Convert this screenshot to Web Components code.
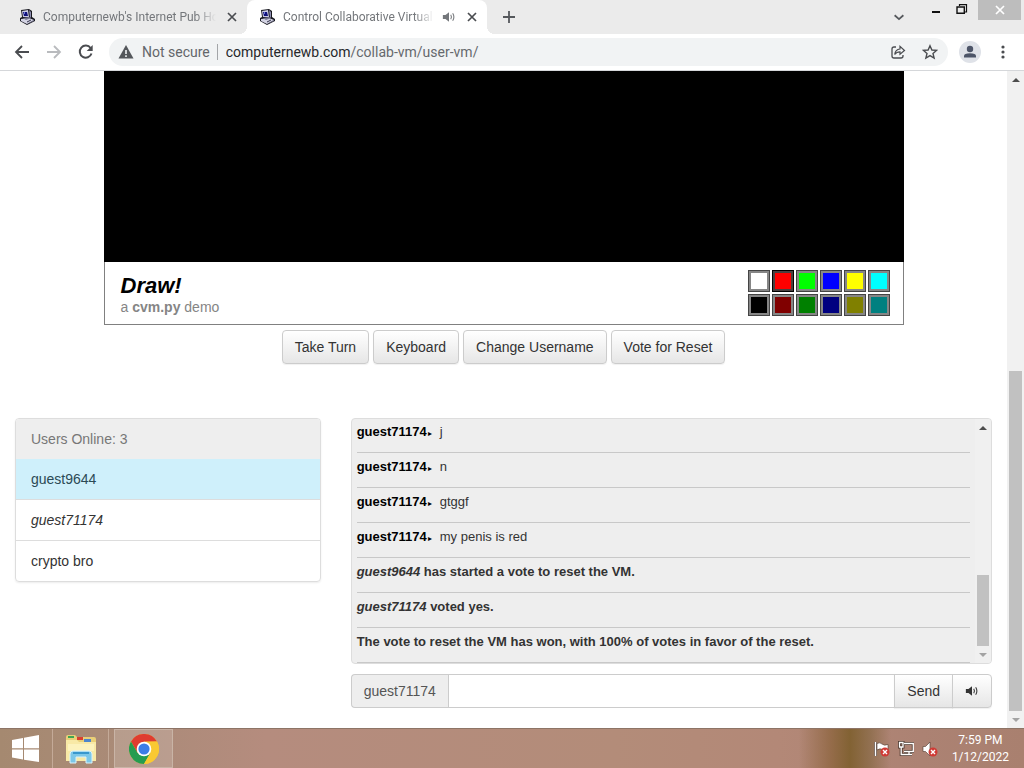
<!DOCTYPE html>
<html lang="en">
<head>
<meta charset="utf-8">
<title>Control Collaborative Virtual Machines</title>
<style>
html, body {
    margin: 0;
    height: 100%;
}
body {
    font-family: Roboto, "Open Sans", sans-serif;
    font-size: 12px;
    overflow: hidden;
}
</style>
</head>
<body>
<desktop-screen>
    <tab-strip slot="tabs">
        <browser-tab>Computernewb's Internet Pub Home</browser-tab>
        <browser-tab active audible>Control Collaborative Virtual Machines</browser-tab>
    </tab-strip>
    <nav-bar slot="nav" host="computernewb.com" path="/collab-vm/user-vm/"></nav-bar>
    <vm-page slot="page">
        <vm-display slot="display"></vm-display>
        <vm-button slot="actions">Take Turn</vm-button>
        <vm-button slot="actions">Keyboard</vm-button>
        <vm-button slot="actions">Change Username</vm-button>
        <vm-button slot="actions">Vote for Reset</vm-button>
        <user-list slot="users"></user-list>
        <chat-box slot="chat" username="guest71174"></chat-box>
    </vm-page>
    <scroll-bar slot="scroll" style="--before: 283; --thumb: 340; --after: 0"></scroll-bar>
    <task-bar slot="taskbar"></task-bar>
</desktop-screen>

<script>
// every component builds its shadow root from the static html of its class
class BaseElement extends HTMLElement {
    constructor() {
        super()
        const template = document.createElement("template")
        template.innerHTML = this.constructor.html
        this.attachShadow({ mode: "open" }).append(template.content.cloneNode(true))
    }
}

const icons = {
    computer: `<svg viewBox="0 0 16 16">
        <path d="M2 1 10 0 13 2 13 8 16 10 16 12 8 16 1 12 1 9 3 8Z" fill="#17171f"/>
        <path d="M3 2 9 1 10 8 4 8Z" fill="#c9c9e2"/>
        <path d="M4 3 8 3 9 7 5 7Z" fill="#11117c"/>
        <path d="M5 3h1v2h-1z" fill="#6d7be0"/>
        <path d="M10 1 12 3 12 8 11 9Z" fill="#8c8cae"/>
        <path d="M2 10 10 9 15 11 8 15 2 12Z" fill="#d4d4e4"/>
        <path d="M2 12 8 15 15 11 15 12 8 15Z" fill="#7a7a96"/>
        <path d="M4 9 10 8 12 9 7 11Z" fill="#77778f"/>
        <path d="M8 13 12 11" stroke="#33334a"/></svg>`,
    close: `<svg viewBox="0 0 16 16"><path d="M4 4 12 12M12 4 4 12" stroke="currentColor" stroke-width="1.7"/></svg>`,
    plus: `<svg viewBox="0 0 16 16"><path d="M8 2V14M2 8H14" stroke="currentColor" stroke-width="1.8"/></svg>`,
    chevron: `<svg viewBox="0 0 16 16"><path d="M3 6 8 10.5 13 6" fill="none" stroke="currentColor" stroke-width="2"/></svg>`,
    minimize: `<svg viewBox="0 0 16 16"><path d="M4 10H12" stroke="#111" stroke-width="2"/></svg>`,
    restore: `<svg viewBox="0 0 16 16"><path d="M5.5 4V2.6H12.5V10H11" fill="none" stroke="#111" stroke-width="1.2"/><path d="M3 5H10.3V11.3H3Z" fill="none" stroke="#111" stroke-width="1.4"/></svg>`,
    back: `<svg viewBox="0 0 16 16"><path d="M15 8H2M8 2 2 8 8 14" fill="none" stroke="currentColor" stroke-width="1.8"/></svg>`,
    forward: `<svg viewBox="0 0 16 16"><path d="M1 8H14M8 2 14 8 8 14" fill="none" stroke="currentColor" stroke-width="1.8"/></svg>`,
    reload: `<svg viewBox="0 0 16 16"><path d="M13.5 9.5A6 6 0 1 1 12.6 4" fill="none" stroke="currentColor" stroke-width="2"/><path d="M14.7 1V7H8.7Z" fill="currentColor"/></svg>`,
    warning: `<svg viewBox="0 0 16 16"><path d="M8 1 15.5 14.5H.5Z" fill="#54575b"/><path d="M8 6V10M8 11.3V13" stroke="#f1f3f4" stroke-width="1.6"/></svg>`,
    share: `<svg viewBox="0 0 16 16"><path d="M6 3H4Q2 3 2 5V12Q2 14 4 14H11Q13 14 13 12V11" fill="none" stroke="currentColor" stroke-width="1.3"/><path d="M4.7 10.5Q5.3 5.3 10 5V2.4L14.5 6.5 10 10.3V7.8Q6.5 7.8 4.7 10.5Z" fill="none" stroke="currentColor" stroke-width="1.2"/></svg>`,
    star: `<svg viewBox="0 0 16 16"><path d="M8 1.8 9.9 6 14.5 6.4 11 9.5 12.1 14 8 11.6 3.9 14 5 9.5 1.5 6.4 6.1 6Z" fill="none" stroke="currentColor" stroke-width="1.4"/></svg>`,
    person: `<svg viewBox="0 0 22 22"><circle cx="11" cy="11" r="11" fill="#dfe2e8"/><circle cx="11" cy="8" r="3.2" fill="#4d5568"/><path d="M5 16.5V15Q5 12.2 11 12.2 17 12.2 17 15V16.5Z" fill="#4d5568"/></svg>`,
    dots: `<svg viewBox="0 0 16 16"><g fill="currentColor"><circle cx="8" cy="3" r="1.6"/><circle cx="8" cy="8" r="1.6"/><circle cx="8" cy="13" r="1.6"/></g></svg>`,
    speaker: `<svg viewBox="0 0 16 16"><path d="M1 5.7H4L8 2.5V13.5L4 10.3H1Z" fill="currentColor"/><path d="M10 5.5Q11.6 8 10 10.5M12.2 3.7Q15 8 12.2 12.3" fill="none" stroke="currentColor" stroke-width="1.2"/></svg>`,
    windows: `<svg viewBox="0 0 28 28"><path d="M1 5 12 3V13.3H1ZM13 2.8 28 0V13.3H13ZM1 14.4H12V24.5L1 22.5ZM13 14.4H28V27L13 24.7Z" fill="#fff"/></svg>`,
    explorer: `<svg viewBox="0 0 32 30">
        <path d="M1 3Q1 1 3 1H10L12 3H29Q31 3 31 5V26H1Z" fill="#e9cf78"/>
        <path d="M1 6H12L14 8H31V27H1Z" fill="#f8e9a6"/>
        <path d="M3 2h6v2H3z" fill="#3fa653"/><path d="M12 3h6v3h-6z" fill="#d9402e"/><path d="M19 5h7v3h-7z" fill="#4d86cc"/>
        <path d="M3 10H29V17H3Z" fill="#fcf2bd"/>
        <path d="M5 29V20Q5 17 8 17H24Q27 17 27 20V29H21V23H11V29Z" fill="#7cc7e8" stroke="#d9f2fb"/>
        <path d="M8 19H24" stroke="#3897cd" stroke-width="2"/></svg>`,
    chrome: `<svg viewBox="0 0 30 30">
        <circle cx="15" cy="15" r="15" fill="#f9c932"/>
        <path d="M2 7.5A15 15 0 0 1 28 7.5L15 8 8.5 18.7Z" fill="#df3c30"/>
        <path d="M2 7.5 8.5 18.7 15 22 21.5 18.7 15 30A15 15 0 0 1 2 7.5Z" fill="#259c50"/>
        <path d="M28 7.5H15L21.5 18.7 15 30A15 15 0 0 0 28 7.5Z" fill="#f9c932"/>
        <circle cx="15" cy="15" r="7.3" fill="#fff"/><circle cx="15" cy="15" r="5.6" fill="#3c7de6"/></svg>`,
    flag: `<svg viewBox="0 0 16 16"><path d="M1.5 1V15" stroke="#4d382e" stroke-width="3"/><path d="M1.5 1V15" stroke="#fff" stroke-width="1.6"/><path d="M3 2.5Q6 1 8 3T14 3.5V9Q11 10 8.5 8.5T3 9Z" fill="#fff" stroke="#4d382e" stroke-width=".6"/><circle cx="11" cy="11" r="4.5" fill="#cf3b35"/><path d="M9 9 13 13M13 9 9 13" stroke="#fff" stroke-width="1.4"/></svg>`,
    network: `<svg viewBox="0 0 16 16"><path d="M6 2.5H15.3V10.5H6M8 13.5H14M11 10.5V13.5M1.5 1.5H5V6H1.5ZM3.2 6V13.5H8" fill="none" stroke="#4d382e" stroke-width="3"/><path d="M6 2.5H15.3V10.5H6M8 13.5H14M11 10.5V13.5M1.5 1.5H5V6H1.5ZM3.2 6V13.5H8" fill="none" stroke="#fff" stroke-width="1.3"/></svg>`,
    muted: `<svg viewBox="0 0 16 16"><path d="M1 5.5H3.5L8 1V15L3.5 10.5H1Z" fill="#fff" stroke="#4d382e" stroke-width=".6"/><circle cx="11" cy="11" r="4.5" fill="#cf3b35"/><path d="M9 9 13 13M13 9 9 13" stroke="#fff" stroke-width="1.4"/></svg>`,
    up: `<svg viewBox="0 0 16 16"><path d="M4 10 8 6 12 10Z" fill="currentColor"/></svg>`,
    down: `<svg viewBox="0 0 16 16"><path d="M4 6 8 10 12 6Z" fill="currentColor"/></svg>`
}

class UiIcon extends BaseElement {
    static html = `
    <style>
    :host {
        display: block;
        flex: none;
        width: var(--size, 16px);
        height: var(--size, 16px);
    }
    svg {
        display: block;
        width: 100%;
        height: 100%;
    }
    </style>`

    connectedCallback() {
        const holder = document.createElement("template")
        holder.innerHTML = icons[this.getAttribute("name")]
        this.shadowRoot.append(holder.content)
    }
}

class DesktopScreen extends BaseElement {
    static html = `
    <style>
    :host {
        display: flex;
        flex-direction: column;
        height: 100vh;
        background: #fff;
    }
    main {
        flex: 1;
        min-height: 0;
        display: flex;
        border-top: 1px solid #d5d7da;
    }
    ::slotted([slot="page"]) {
        flex: 1;
        min-width: 0;
    }
    </style>
    <slot name="tabs"></slot>
    <slot name="nav"></slot>
    <main>
        <slot name="page"></slot>
        <slot name="scroll"></slot>
    </main>
    <slot name="taskbar"></slot>`
}

class TabStrip extends BaseElement {
    static html = `
    <style>
    :host {
        display: flex;
        height: 34px;
        padding-left: 7px;
        background: #ebebeb;
        color: #55585c;
    }
    button {
        border: 0;
        padding: 0;
        background: none;
        color: inherit;
    }
    .new {
        padding: 0 14px;
    }
    .list {
        margin-left: auto;
        padding: 0 17px;
        --size: 14px;
    }
    .window {
        display: flex;
        align-items: flex-start;
        padding-right: 3px;
    }
    .window button {
        width: 26px;
        height: 20px;
        display: flex;
        justify-content: center;
        align-items: center;
    }
    .window .shut {
        width: 43px;
        margin-left: 3px;
        background: #bdbdbd;
        color: #fff;
    }
    </style>
    <slot></slot>
    <button class="new" aria-label="New tab"><ui-icon name="plus"></ui-icon></button>
    <button class="list" aria-label="Search tabs"><ui-icon name="chevron"></ui-icon></button>
    <div class="window">
        <button aria-label="Minimize"><ui-icon name="minimize"></ui-icon></button>
        <button aria-label="Restore"><ui-icon name="restore"></ui-icon></button>
        <button class="shut" aria-label="Close"><ui-icon name="close"></ui-icon></button>
    </div>`
}

class BrowserTab extends BaseElement {
    static html = `
    <style>
    :host {
        position: relative;
        box-sizing: border-box;
        flex: 0 1 240px;
        min-width: 0;
        display: flex;
        align-items: center;
        gap: 8px;
        padding: 0 7px 0 12px;
        color: #74777b;
    }
    :host([active]) {
        background: #fff;
        border-radius: 8px 8px 0 0;
    }
    /* flared feet of the active tab */
    :host([active])::before, :host([active])::after {
        content: "";
        position: absolute;
        bottom: 0;
        width: 8px;
        height: 8px;
    }
    :host([active])::before {
        right: 100%;
        background: radial-gradient(circle at 0 0, transparent 8px, #fff 8px);
    }
    :host([active])::after {
        left: 100%;
        background: radial-gradient(circle at 100% 0, transparent 8px, #fff 8px);
    }
    .title {
        flex: 1;
        overflow: hidden;
        white-space: nowrap;
        line-height: 20px;
        -webkit-mask-image: linear-gradient(to left, transparent, #000 20px);
        mask-image: linear-gradient(to left, transparent, #000 20px);
    }
    .sound {
        display: none;
        --size: 14px;
    }
    :host([audible]) .sound {
        display: block;
    }
    button {
        border: 0;
        padding: 0;
        background: none;
        color: #4a4c50;
    }
    </style>
    <ui-icon name="computer"></ui-icon>
    <span class="title"><slot></slot></span>
    <ui-icon class="sound" name="speaker"></ui-icon>
    <button aria-label="Close tab"><ui-icon name="close"></ui-icon></button>`
}

class NavBar extends BaseElement {
    static html = `
    <style>
    :host {
        display: flex;
        align-items: center;
        height: 36px;
        padding: 0 13px 0 14px;
        background: #fff;
        color: #4a4c50;
    }
    button {
        border: 0;
        padding: 0;
        background: none;
        color: inherit;
    }
    .nav {
        display: flex;
        gap: 16px;
        padding-right: 15px;
    }
    .nav button:nth-child(2) {
        color: #b9bbbe;
    }
    .address {
        flex: 1;
        min-width: 0;
        display: flex;
        align-items: center;
        gap: 8px;
        height: 28px;
        padding: 0 10px 0 9px;
        border-radius: 14px;
        background: #f1f3f4;
        font-size: 14px;
        line-height: 20px;
    }
    .security {
        padding-right: 7px;
        border-right: 1px solid #a3a5a8;
        line-height: 16px;
        white-space: nowrap;
        color: #63666a;
    }
    .url {
        flex: 1;
        overflow: hidden;
        white-space: nowrap;
        color: #66696d;
    }
    .url b {
        font-weight: normal;
        color: #26282b;
    }
    .star {
        margin-left: 8px;
    }
    .profile {
        margin: 0 14px 0 11px;
        --size: 22px;
    }
    </style>
    <div class="nav">
        <button aria-label="Back"><ui-icon name="back"></ui-icon></button>
        <button aria-label="Forward"><ui-icon name="forward"></ui-icon></button>
        <button aria-label="Reload"><ui-icon name="reload"></ui-icon></button>
    </div>
    <div class="address">
        <ui-icon name="warning"></ui-icon>
        <span class="security">Not secure</span>
        <span class="url"><b></b><span class="path"></span></span>
        <button aria-label="Share"><ui-icon name="share"></ui-icon></button>
        <button class="star" aria-label="Bookmark"><ui-icon name="star"></ui-icon></button>
    </div>
    <button class="profile" aria-label="Profile"><ui-icon name="person"></ui-icon></button>
    <button aria-label="Menu"><ui-icon name="dots"></ui-icon></button>`

    connectedCallback() {
        this.shadowRoot.querySelector("b").textContent = this.getAttribute("host")
        this.shadowRoot.querySelector(".path").textContent = this.getAttribute("path")
    }
}

// --before, --thumb and --after are the shares of the track
class ScrollBar extends BaseElement {
    static html = `
    <style>
    :host {
        display: flex;
        flex-direction: column;
        flex: none;
        width: 17px;
        background: #f1f1f1;
    }
    .arrow {
        height: 17px;
        display: flex;
        justify-content: center;
        align-items: center;
        color: #4d4d4d;
    }
    .arrow:last-child {
        color: #a3a3a3;
    }
    .thumb {
        flex: var(--thumb) 0 0;
        margin: 0 2px;
        background: #c1c1c1;
    }
    .before {
        flex: var(--before) 0 0;
    }
    .after {
        flex: var(--after) 0 0;
    }
    </style>
    <div class="arrow"><ui-icon name="up"></ui-icon></div>
    <div class="before"></div>
    <div class="thumb"></div>
    <div class="after"></div>
    <div class="arrow"><ui-icon name="down"></ui-icon></div>`
}

class VmPage extends BaseElement {
    static html = `
    <style>
    :host {
        display: block;
        overflow: hidden;
        font-family: "Liberation Sans", Arial, sans-serif;
        font-size: 14px;
        line-height: 20px;
        color: #333;
    }
    .actions {
        display: flex;
        flex-wrap: wrap;
        justify-content: center;
        gap: 4px;
        padding: 5px 15px 54px;
    }
    .columns {
        display: grid;
        grid-template-columns: 1fr 2fr;
        align-items: start;
    }
    .column {
        padding: 0 15px;
        min-width: 0;
    }
    </style>
    <slot name="display"></slot>
    <div class="actions"><slot name="actions"></slot></div>
    <div class="columns">
        <div class="column"><slot name="users"></slot></div>
        <div class="column"><slot name="chat"></slot></div>
    </div>`
}

class VmDisplay extends BaseElement {
    static html = `
    <style>
    :host {
        display: block;
        max-width: 800px;
        margin: 0 auto;
    }
    .canvas {
        height: 191px;
        background: #000;
    }
    .panel {
        display: flex;
        justify-content: space-between;
        padding: 8px 13px 8px 16px;
        border: 1px solid #808080;
        border-top: 0;
    }
    h1, p {
        margin: 0;
    }
    h1 {
        padding-top: 4px;
        font-size: 22px;
        line-height: 24px;
        font-style: italic;
        color: #000;
    }
    p {
        line-height: 18px;
        color: #858585;
    }
    .palette {
        display: grid;
        grid-template-columns: repeat(6, 22px);
        grid-auto-rows: 22px;
        gap: 2px;
    }
    .palette button {
        padding: 0;
        border: 1px solid #444;
        box-shadow: inset 0 0 0 2px #868686;
    }
    .palette button[aria-pressed="true"] {
        border-color: #000;
        box-shadow: inset 0 0 0 2px #4a4040;
    }
    </style>
    <div class="canvas"></div>
    <div class="panel">
        <div>
            <h1>Draw!</h1>
            <p>a <b>cvm.py</b> demo</p>
        </div>
        <div class="palette"></div>
    </div>`

    connectedCallback() {
        const colors = ["white", "red", "lime", "blue", "yellow", "cyan", "black", "maroon", "green", "navy", "olive", "teal"]
        const palette = this.shadowRoot.querySelector(".palette")
        for (const color of colors) {
            const button = document.createElement("button")
            button.style.backgroundColor = color
            button.setAttribute("aria-label", color)
            button.setAttribute("aria-pressed", color === "red")
            palette.append(button)
        }
    }
}

class VmButton extends BaseElement {
    static html = `
    <style>
    :host {
        display: block;
    }
    button {
        padding: 6px 12px;
        border: 1px solid #ccc;
        border-radius: var(--radius, 4px);
        background: linear-gradient(#fff, #e6e6e6);
        box-shadow: inset 0 1px 0 #fff, 0 1px 1px rgba(0, 0, 0, .06);
        font: inherit;
        color: #333;
    }
    </style>
    <button><slot></slot></button>`
}

class UserList extends BaseElement {
    static html = `
    <style>
    :host {
        display: block;
    }
    ul {
        list-style: none;
        margin: 0;
        padding: 0;
        border: 1px solid #ddd;
        border-radius: 4px;
        overflow: hidden;
        box-shadow: 0 1px 2px rgba(0, 0, 0, .08);
    }
    li {
        padding: 10px 15px;
    }
    li + li + li {
        border-top: 1px solid #ddd;
    }
    .heading {
        background: #eee;
        color: #777;
    }
    .turn {
        background: #cff0fb;
        color: #2b4a55;
    }
    .self {
        font-style: italic;
    }
    </style>
    <ul>
        <li class="heading">Users Online: 3</li>
        <li class="turn">guest9644</li>
        <li class="self">guest71174</li>
        <li>crypto bro</li>
    </ul>`
}

class ChatBox extends BaseElement {
    static html = `
    <style>
    :host {
        display: block;
    }
    .log {
        display: flex;
        height: 244px;
        border: 1px solid #ddd;
        border-radius: 4px;
        overflow: hidden;
        background: #eee;
    }
    ul {
        flex: 1;
        display: flex;
        flex-direction: column;
        justify-content: flex-end;
        list-style: none;
        margin: 0 5px;
        padding: 0;
        font-size: 13px;
    }
    li {
        flex: none;
        padding: 4px 0 10px;
        border-bottom: 1px solid #c8c8c8;
    }
    .name {
        color: #000;
    }
    .name::after {
        content: "\\25B8";
        margin: 0 8px 0 1px;
        font-weight: normal;
        font-size: 8px;
        line-height: 0;
    }
    scroll-bar {
        width: 16px;
        --before: 139;
        --thumb: 71;
        --after: 0;
        background: #f0f0f0;
    }
    form {
        display: flex;
        margin-top: 10px;
    }
    label {
        padding: 6px 12px;
        border: 1px solid #ccc;
        border-right: 0;
        border-radius: 4px 0 0 4px;
        background: #eee;
        color: #555;
    }
    input {
        flex: 1;
        min-width: 0;
        padding: 6px 12px;
        border: 1px solid #ccc;
        border-right: 0;
        outline: 0;
        font: inherit;
    }
    .send {
        --radius: 0;
    }
    .mute {
        margin-left: -1px;
        --radius: 0 4px 4px 0;
        --size: 14px;
    }
    .mute ui-icon {
        margin: 3px 0;
    }
    </style>
    <div class="log">
        <ul>
            <li><b class="name">guest71174</b>j</li>
            <li><b class="name">guest71174</b>n</li>
            <li><b class="name">guest71174</b>gtggf</li>
            <li><b class="name">guest71174</b>my penis is red</li>
            <li><b><i>guest9644</i> has started a vote to reset the VM.</b></li>
            <li><b><i>guest71174</i> voted yes.</b></li>
            <li><b>The vote to reset the VM has won, with 100% of votes in favor of the reset.</b></li>
        </ul>
        <scroll-bar></scroll-bar>
    </div>
    <form onsubmit="return false">
        <label for="message"></label>
        <input id="message" type="text" autocomplete="off">
        <vm-button class="send">Send</vm-button>
        <vm-button class="mute"><ui-icon name="speaker"></ui-icon></vm-button>
    </form>`

    connectedCallback() {
        this.shadowRoot.querySelector("label").textContent = this.getAttribute("username")
    }
}

class TaskBar extends BaseElement {
    static html = `
    <style>
    :host {
        box-sizing: border-box;
        display: flex;
        flex: none;
        height: 40px;
        border-top: 1px solid #8d7466;
        background:
            linear-gradient(to right, transparent 78%, rgba(139, 98, 58, .7) 81%, rgba(122, 92, 40, .85) 83%, rgba(134, 104, 66, .7) 85%, transparent 87%),
            linear-gradient(to right, #a58970, #ab8b79 14%, #b58c7e 26%, #b38c79 60%, #b38877 76%, #ac8273 90%, #a9806f);
        color: #fff;
    }
    button {
        box-sizing: border-box;
        display: flex;
        justify-content: center;
        align-items: center;
        border: 0;
        padding: 0;
        background: none;
    }
    .start {
        width: 52px;
        padding-right: 3px;
        --size: 28px;
    }
    .files {
        width: 57px;
        border: 1px solid #c4aa98;
        border-width: 0 1px;
        --size: 32px;
    }
    .browser {
        width: 59px;
        margin-left: 5px;
        border: 1px solid #c9b4a6;
        background: rgba(255, 255, 255, .16);
        --size: 30px;
    }
    .tray {
        display: flex;
        align-items: center;
        gap: 8px;
        margin-left: auto;
        padding-right: 14px;
    }
    time {
        align-self: center;
        padding-right: 15px;
        line-height: 17px;
        text-align: center;
    }
    </style>
    <button class="start" aria-label="Start"><ui-icon name="windows"></ui-icon></button>
    <button class="files" aria-label="File Explorer"><ui-icon name="explorer"></ui-icon></button>
    <button class="browser" aria-label="Google Chrome"><ui-icon name="chrome"></ui-icon></button>
    <div class="tray">
        <ui-icon name="flag"></ui-icon>
        <ui-icon name="network"></ui-icon>
        <ui-icon name="muted"></ui-icon>
    </div>
    <time datetime="2022-01-12T19:59">7:59 PM<br>1/12/2022</time>`
}

customElements.define("ui-icon", UiIcon)
customElements.define("scroll-bar", ScrollBar)
customElements.define("browser-tab", BrowserTab)
customElements.define("tab-strip", TabStrip)
customElements.define("nav-bar", NavBar)
customElements.define("vm-button", VmButton)
customElements.define("vm-display", VmDisplay)
customElements.define("user-list", UserList)
customElements.define("chat-box", ChatBox)
customElements.define("vm-page", VmPage)
customElements.define("task-bar", TaskBar)
customElements.define("desktop-screen", DesktopScreen)
</script>
</body>
</html>
